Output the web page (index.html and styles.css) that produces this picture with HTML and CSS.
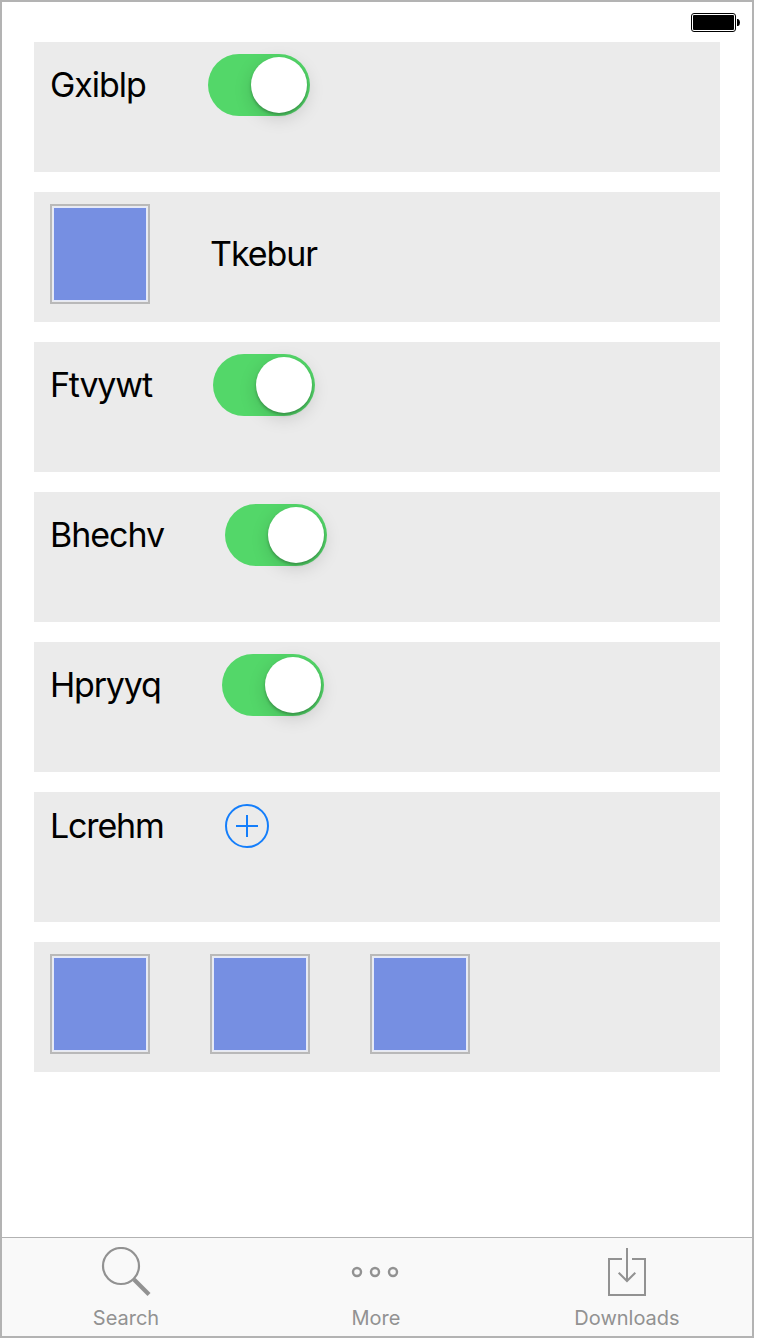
FILE: index.html
```html
<!DOCTYPE html>
<html lang="en">
<head>
<meta charset="utf-8">
<title>Controls</title>
<link rel="stylesheet" href="styles.css">
</head>
<body>
<div class="screen">
  <header class="status">
    <svg class="battery" width="50" height="20" viewBox="0 0 50 20">
      <rect x="0.5" y="0.5" width="44" height="18" rx="2.5" fill="#fff" stroke="#000"/>
      <rect x="2" y="2" width="41" height="15" rx="1" fill="#000"/>
      <path d="M46 6h1.200q1.800 1 1.800 3.500t-1.800 3.500H46z" fill="#000"/>
    </svg>
  </header>
  <main class="rows">
    <section class="row"><div class="line"><span class="label gxiblp">Gxiblp</span><span class="toggle"><span class="knob"></span></span></div></section>
    <section class="row"><div class="line"><span class="swatch"></span><span class="label tkebur">Tkebur</span></div></section>
    <section class="row"><div class="line"><span class="label ftvywt">Ftvywt</span><span class="toggle"><span class="knob"></span></span></div></section>
    <section class="row"><div class="line"><span class="label bhechv">Bhechv</span><span class="toggle"><span class="knob"></span></span></div></section>
    <section class="row"><div class="line"><span class="label hpryyq">Hpryyq</span><span class="toggle"><span class="knob"></span></span></div></section>
    <section class="row"><div class="line"><span class="label lcrehm">Lcrehm</span>
      <svg class="add" width="44" height="44" viewBox="0 0 44 44" fill="none" stroke="#147efb" stroke-width="2"><circle cx="22" cy="22" r="21"/><path d="M11 22h22M22 11v22"/></svg></div></section>
    <section class="row"><div class="line"><span class="swatch"></span><span class="swatch"></span><span class="swatch"></span></div></section>
  </main>
  <nav class="tabs">
    <div class="tab">
      <svg class="icon" width="50" height="50" viewBox="0 0 50 50" fill="none" stroke="#929292"><circle cx="20" cy="19" r="18" stroke-width="2.200"/><path d="M33 32.500L48 47.500" stroke-width="4.200"/></svg>
      <span class="caption">Search</span>
    </div>
    <div class="tab">
      <svg class="icon" width="50" height="50" viewBox="0 0 50 50" fill="none" stroke="#929292" stroke-width="2.400"><circle cx="6" cy="25" r="4"/><circle cx="24" cy="25" r="4"/><circle cx="42" cy="25" r="4"/></svg>
      <span class="caption">More</span>
    </div>
    <div class="tab">
      <svg class="icon" width="50" height="50" viewBox="0 0 50 50" fill="none" stroke="#929292" stroke-width="2"><path d="M20 12H7v36h36V12H30M25 1v33M16.700 25.700L25 34l8.300-8.300"/></svg>
      <span class="caption">Downloads</span>
    </div>
  </nav>
</div>
</body>
</html>
```

FILE: styles.css
```css
* { box-sizing: border-box; }
body {
  margin: 0;
  background: #fff;
  font-family: Inter, "Liberation Sans", sans-serif;
}
.screen {
  width: 754px;
  height: 1338px;
  border: 2px solid #b3b3b3;
  display: flex;
  flex-direction: column;
}
.status {
  height: 40px;
  padding: 11px 11px 0 0;
  display: flex;
  justify-content: flex-end;
  align-items: flex-start;
}
.battery, .add, .icon { display: block; flex: none; }
.rows {
  flex: 1;
  padding: 0 32px;
  display: flex;
  flex-direction: column;
  gap: 20px;
}
.row {
  height: 130px;
  padding: 12px 16px;
  background: #ebebeb;
}
.line {
  display: flex;
  align-items: center;
  gap: 60px;
}
.label {
  font-size: 34px;
  line-height: 40px;
  letter-spacing: -1.05px;
  color: #000;
  white-space: nowrap;
}
.gxiblp { width: 98px; }
.ftvywt { width: 103px; letter-spacing: -1.2px; }
.bhechv { width: 115px; }
.hpryyq { width: 112px; letter-spacing: -1.2px; }
.lcrehm { width: 115px; letter-spacing: -1.15px; }
.toggle {
  flex: none;
  width: 102px;
  height: 62px;
  padding: 3px;
  border-radius: 31px;
  background: #53d769;
  display: flex;
  justify-content: flex-end;
}
.knob {
  width: 56px;
  height: 56px;
  border-radius: 50%;
  background: #fff;
  box-shadow: 0 2px 3px rgba(0, 0, 0, .25), 0 5px 18px rgba(0, 0, 0, .15);
}
.swatch {
  width: 100px;
  height: 100px;
  border: 2px solid #b9b9b9;
  padding: 2px;
  background: #768fe2 content-box;
  box-shadow: inset 0 0 0 1px #e9eaee, inset 0 0 0 2px #e4e9fa;
}
.tabs {
  height: 99px;
  border-top: 1px solid #b2b2b2;
  background: #f9f9f9;
  display: grid;
  grid-template-columns: 248px 252px 250px;
}
.tab {
  padding-top: 9px;
  display: flex;
  flex-direction: column;
  align-items: center;
}
.caption {
  margin-top: 9px;
  font-size: 20px;
  line-height: 24px;
  color: #929292;
  white-space: nowrap;
}
```
